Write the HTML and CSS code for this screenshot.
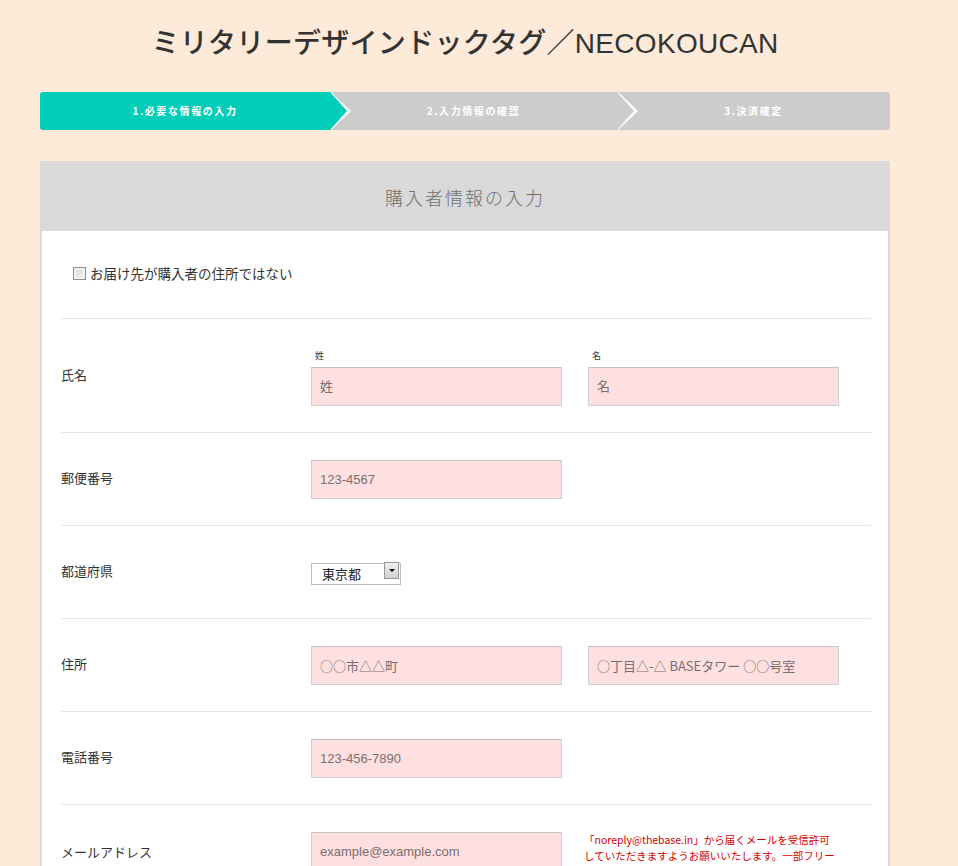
FILE: index.html
```html
<!DOCTYPE html>
<html lang="ja">
<head>
    <meta charset="UTF-8">
    <meta name="viewport" content="width=device-width, initial-scale=1.0">
    <title>ミリタリーデザインドックタグ／NECOKOUCAN</title>
    <link rel="stylesheet" href="styles.css">
</head>
<body>
    <div class="wrap">
        <h1 class="shop-title">ミリタリーデザインドックタグ／NECOKOUCAN</h1>

        <ol class="steps">
            <li class="step step-active">1.必要な情報の入力</li>
            <li class="step">2.入力情報の確認</li>
            <li class="step step-last">3.決済確定</li>
        </ol>

        <div class="card">
            <div class="card-head">購入者情報の入力</div>
            <div class="card-body">
                <div class="check-row">
                    <label class="check-label"><input type="checkbox" class="check"> お届け先が購入者の住所ではない</label>
                </div>

                <div class="row row-name">
                    <div class="row-label">氏名</div>
                    <div class="row-fields">
                        <div class="name-col">
                            <div class="mini-label">姓</div>
                            <input class="text-input" type="text" placeholder="姓">
                        </div>
                        <div class="name-col">
                            <div class="mini-label">名</div>
                            <input class="text-input" type="text" placeholder="名">
                        </div>
                    </div>
                </div>

                <div class="row">
                    <div class="row-label">郵便番号</div>
                    <div class="row-fields">
                        <input class="text-input" type="text" placeholder="123-4567">
                    </div>
                </div>

                <div class="row">
                    <div class="row-label">都道府県</div>
                    <div class="row-fields">
                        <div class="select-box">
                            <select class="select">
                                <option>東京都</option>
                                <option>北海道</option>
                                <option>大阪府</option>
                            </select>
                            <span class="select-btn"><span class="select-arrow"></span></span>
                        </div>
                    </div>
                </div>

                <div class="row">
                    <div class="row-label">住所</div>
                    <div class="row-fields">
                        <input class="text-input text-input-jp" type="text" placeholder="○○市△△町">
                        <input class="text-input text-input-jp" type="text" placeholder="○丁目△-△ BASEタワー ○○号室">
                    </div>
                </div>

                <div class="row">
                    <div class="row-label">電話番号</div>
                    <div class="row-fields">
                        <input class="text-input" type="text" placeholder="123-456-7890">
                    </div>
                </div>

                <div class="row row-top">
                    <div class="row-label">メールアドレス</div>
                    <div class="row-fields">
                        <input class="text-input" type="text" placeholder="example@example.com">
                        <p class="mail-note">「noreply@thebase.in」から届くメールを受信許可していただきますようお願いいたします。一部フリーメールでは迷惑メールフォルダに振り分けられる場合がございます。</p>
                    </div>
                </div>
            </div>
        </div>
    </div>
</body>
</html>
```

FILE: styles.css
```css
body {
    margin: 0;
    background-color: #fdead8;
    color: #333;
    font-family: "Noto Sans CJK JP", sans-serif;
}

.wrap {
    width: 850px;
    margin-left: 40px;
    padding-bottom: 40px;
}

.shop-title {
    margin: 24px 0 28px;
    height: 40px;
    line-height: 40px;
    text-align: center;
    font-family: "Liberation Sans", "Noto Sans CJK JP", sans-serif;
    font-size: 28px;
    font-weight: 500;
    color: #333;
    letter-spacing: 0.3px;
}

/* progress bar */
.steps {
    display: grid;
    grid-template-columns: 290px 287px 1fr;
    margin: 0 0 31px;
    padding: 0;
    list-style: none;
    height: 38px;
}

.step {
    position: relative;
    height: 38px;
    line-height: 38px;
    background-color: #cccccc;
    color: #fff;
    font-size: 10px;
    font-weight: bold;
    letter-spacing: 1.6px;
    text-align: center;
}

.step-active {
    background-color: #00ceb8;
    border-radius: 3px 0 0 3px;
}

.step-last {
    border-radius: 0 3px 3px 0;
}

.step:not(.step-last)::after,
.step:not(.step-last)::before {
    content: "";
    position: absolute;
    top: 0;
    width: 0;
    height: 0;
    border-top: 19px solid transparent;
    border-bottom: 19px solid transparent;
    z-index: 2;
}

.step:not(.step-last)::after {
    right: -21px;
    border-left: 20px solid #fff;
}

.step:not(.step-last)::before {
    right: -17px;
    border-left: 17px solid #cccccc;
    z-index: 3;
}

.step-active::before {
    border-left-color: #00ceb8 !important;
}

/* card */
.card {
    border: 2px solid #dadada;
    border-bottom: none;
    background-color: #fff;
}

.card-head {
    height: 68px;
    line-height: 68px;
    background-color: #d9d9d9;
    text-align: center;
    font-size: 18px;
    font-weight: 300;
    color: #707070;
    letter-spacing: 2px;
}

.card-body {
    padding: 0 17px 0 19px;
}

.check-row {
    height: 87px;
    padding-left: 12px;
    display: flex;
    align-items: center;
    border-bottom: 1px solid #e6e6e6;
}

.check-label {
    display: flex;
    align-items: center;
    margin-bottom: 4px;
    font-size: 13.5px;
    color: #333;
}

.check {
    appearance: none;
    width: 13px;
    height: 13px;
    margin: 2px 4px 0 0;
    border: 1px solid #8f8f8f;
    background: linear-gradient(135deg, #d8d8d8, #f4f4f4);
    box-shadow: inset 0 0 0 2px #f0f0f0;
}

.row {
    display: flex;
    align-items: center;
    padding: 27px 0 26px;
    border-bottom: 1px solid #e6e6e6;
}

.row-name {
    padding-top: 28px;
}

.row-top {
    align-items: flex-start;
}

.row-top .row-label {
    line-height: 39px;
    margin-bottom: 0;
}

.row-label {
    width: 250px;
    flex-shrink: 0;
    margin-bottom: 4px;
    font-size: 13px;
    color: #333;
}

.row-fields {
    display: flex;
    align-items: center;
    gap: 26px;
    min-height: 39px;
}

.row-top .row-fields {
    align-items: flex-start;
}

.name-col {
    display: flex;
    flex-direction: column;
}

.mini-label {
    height: 17px;
    line-height: 17px;
    margin: 0 0 3px 4px;
    font-size: 9px;
    color: #333;
}

.text-input {
    box-sizing: border-box;
    width: 251px;
    height: 39px;
    margin: 0;
    padding: 0 8px;
    border: 1px solid #cfcfcf;
    border-top-color: #c4c4c4;
    background-color: #ffe0e0;
    font-family: "Liberation Sans", "Noto Sans CJK JP", sans-serif;
    font-size: 13px;
    color: #333;
}

.text-input-jp {
    font-family: "Noto Sans CJK JP", sans-serif;
}

.text-input::placeholder {
    color: #7a6e6e;
}

.select-box {
    position: relative;
    width: 90px;
    height: 22px;
    margin-bottom: 3px;
}

.select {
    appearance: none;
    box-sizing: border-box;
    width: 90px;
    height: 22px;
    margin: 0;
    padding: 0 0 2px 10px;
    border: 1px solid #bdbdbd;
    border-radius: 0;
    background-color: #fff;
    font-family: "Noto Sans CJK JP", sans-serif;
    font-size: 13px;
    color: #222;
}

.select-btn {
    position: absolute;
    top: 2px;
    right: 2px;
    width: 15px;
    height: 17px;
    border: 1px solid #999;
    box-sizing: border-box;
    background: linear-gradient(#f2f2f2, #cfcfcf);
    display: flex;
    align-items: center;
    justify-content: center;
    pointer-events: none;
}

.select-arrow {
    width: 0;
    height: 0;
    border-left: 3px solid transparent;
    border-right: 3px solid transparent;
    border-top: 3px solid #000;
}

.mail-note {
    width: 255px;
    margin: 0 0 0 -4px;
    font-size: 10.5px;
    line-height: 16px;
    color: #d40000;
}
```
